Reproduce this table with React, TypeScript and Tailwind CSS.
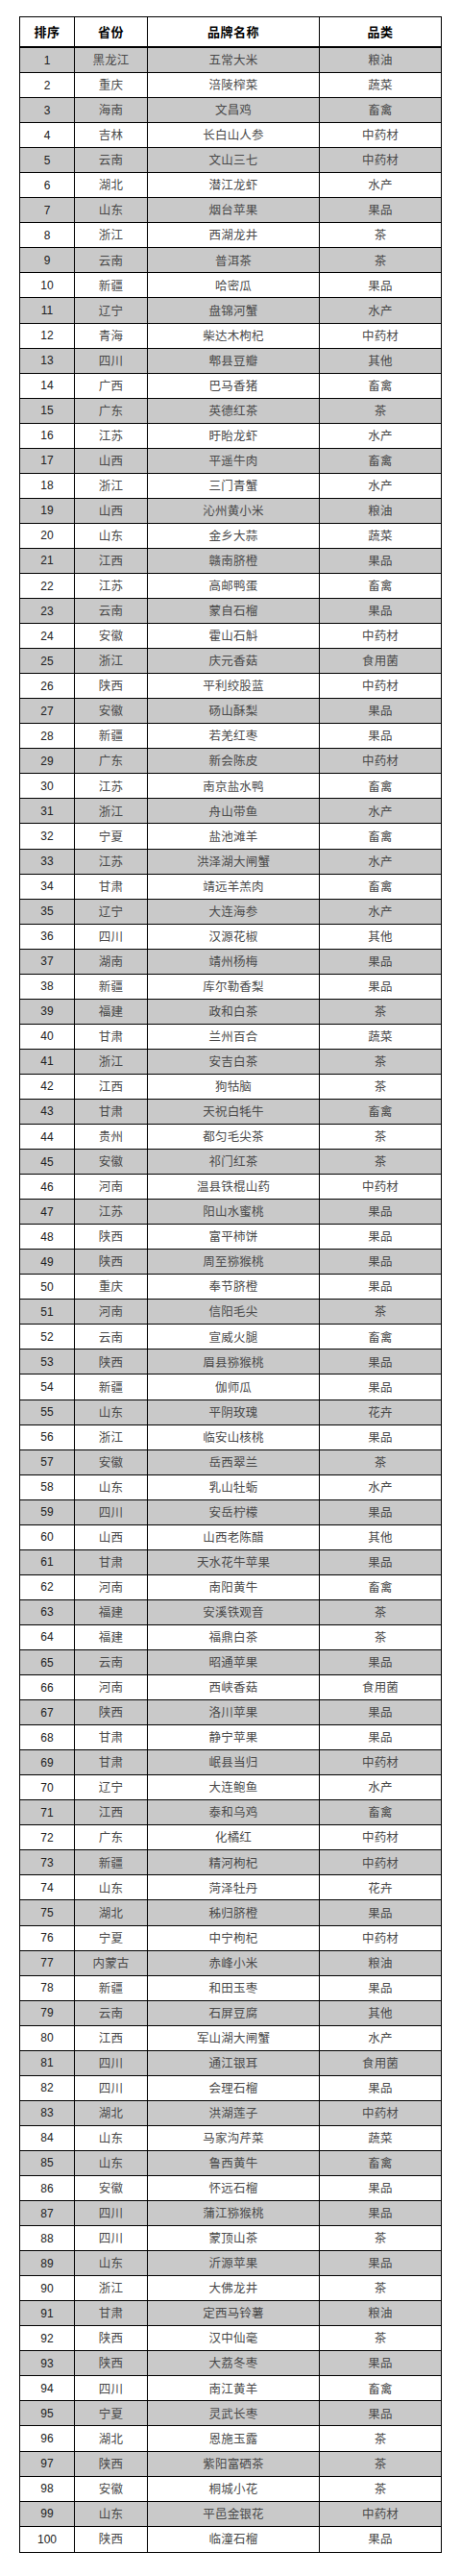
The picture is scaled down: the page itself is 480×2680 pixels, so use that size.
interface Brand {
  rank: number;
  province: string;
  name: string;
  category: string;
}

// 排序|省份|品牌名称|品类
const RAW = `黑龙江 五常大米 粮油
重庆 涪陵榨菜 蔬菜
海南 文昌鸡 畜禽
吉林 长白山人参 中药材
云南 文山三七 中药材
湖北 潜江龙虾 水产
山东 烟台苹果 果品
浙江 西湖龙井 茶
云南 普洱茶 茶
新疆 哈密瓜 果品
辽宁 盘锦河蟹 水产
青海 柴达木枸杞 中药材
四川 郫县豆瓣 其他
广西 巴马香猪 畜禽
广东 英德红茶 茶
江苏 盱眙龙虾 水产
山西 平遥牛肉 畜禽
浙江 三门青蟹 水产
山西 沁州黄小米 粮油
山东 金乡大蒜 蔬菜
江西 赣南脐橙 果品
江苏 高邮鸭蛋 畜禽
云南 蒙自石榴 果品
安徽 霍山石斛 中药材
浙江 庆元香菇 食用菌
陕西 平利绞股蓝 中药材
安徽 砀山酥梨 果品
新疆 若羌红枣 果品
广东 新会陈皮 中药材
江苏 南京盐水鸭 畜禽
浙江 舟山带鱼 水产
宁夏 盐池滩羊 畜禽
江苏 洪泽湖大闸蟹 水产
甘肃 靖远羊羔肉 畜禽
辽宁 大连海参 水产
四川 汉源花椒 其他
湖南 靖州杨梅 果品
新疆 库尔勒香梨 果品
福建 政和白茶 茶
甘肃 兰州百合 蔬菜
浙江 安吉白茶 茶
江西 狗牯脑 茶
甘肃 天祝白牦牛 畜禽
贵州 都匀毛尖茶 茶
安徽 祁门红茶 茶
河南 温县铁棍山药 中药材
江苏 阳山水蜜桃 果品
陕西 富平柿饼 果品
陕西 周至猕猴桃 果品
重庆 奉节脐橙 果品
河南 信阳毛尖 茶
云南 宣威火腿 畜禽
陕西 眉县猕猴桃 果品
新疆 伽师瓜 果品
山东 平阴玫瑰 花卉
浙江 临安山核桃 果品
安徽 岳西翠兰 茶
山东 乳山牡蛎 水产
四川 安岳柠檬 果品
山西 山西老陈醋 其他
甘肃 天水花牛苹果 果品
河南 南阳黄牛 畜禽
福建 安溪铁观音 茶
福建 福鼎白茶 茶
云南 昭通苹果 果品
河南 西峡香菇 食用菌
陕西 洛川苹果 果品
甘肃 静宁苹果 果品
甘肃 岷县当归 中药材
辽宁 大连鲍鱼 水产
江西 泰和乌鸡 畜禽
广东 化橘红 中药材
新疆 精河枸杞 中药材
山东 菏泽牡丹 花卉
湖北 秭归脐橙 果品
宁夏 中宁枸杞 中药材
内蒙古 赤峰小米 粮油
新疆 和田玉枣 果品
云南 石屏豆腐 其他
江西 军山湖大闸蟹 水产
四川 通江银耳 食用菌
四川 会理石榴 果品
湖北 洪湖莲子 中药材
山东 马家沟芹菜 蔬菜
山东 鲁西黄牛 畜禽
安徽 怀远石榴 果品
四川 蒲江猕猴桃 果品
四川 蒙顶山茶 茶
山东 沂源苹果 果品
浙江 大佛龙井 茶
甘肃 定西马铃薯 粮油
陕西 汉中仙毫 茶
陕西 大荔冬枣 果品
四川 南江黄羊 畜禽
宁夏 灵武长枣 果品
湖北 恩施玉露 茶
陕西 紫阳富硒茶 茶
安徽 桐城小花 茶
山东 平邑金银花 中药材
陕西 临潼石榴 果品`;

const BRANDS: Brand[] = RAW.split("\n").map((line, i) => {
  const [province, name, category] = line.trim().split(" ");
  return { rank: i + 1, province, name, category };
});

const COLS = "grid grid-cols-[57px_76px_179px_126px]";
const CJK = "font-['Noto_Sans_CJK_SC',sans-serif]";

export default function App() {
  return (
    <div className="min-h-[2680px] w-[480px] bg-white pt-[17px]">
      <div className="ml-[20px] w-[440px] border border-black">
        {/* Header */}
        <div
          className={`${COLS} h-[32px] border-b-2 border-black text-[13px] font-bold tracking-[0.5px] text-black ${CJK}`}
        >
          {["排序", "省份", "品牌名称", "品类"].map((h, i) => (
            <div
              key={h}
              className={`flex items-center justify-center ${i < 3 ? "border-r border-black" : ""}`}
            >
              {h}
            </div>
          ))}
        </div>

        {/* Rows */}
        {BRANDS.map((b, i) => (
          <div
            key={b.rank}
            className={`${COLS} h-[26.05px] ${i < BRANDS.length - 1 ? "border-b border-black" : ""} ${
              b.rank % 2 === 1 ? "bg-[#c9c9c9]" : "bg-white"
            } text-[12.5px] text-[#4a4a4a]`}
          >
            <div className="flex items-center justify-center border-r border-black font-['Liberation_Sans',sans-serif] text-[12px] text-[#222]">
              {b.rank}
            </div>
            <div className={`flex items-center justify-center border-r border-black tracking-[0.2px] ${CJK}`}>
              {b.province}
            </div>
            <div className={`flex items-center justify-center border-r border-black tracking-[0.2px] ${CJK}`}>
              {b.name}
            </div>
            <div className={`flex items-center justify-center tracking-[0.2px] ${CJK}`}>
              {b.category}
            </div>
          </div>
        ))}
      </div>
    </div>
  );
}
